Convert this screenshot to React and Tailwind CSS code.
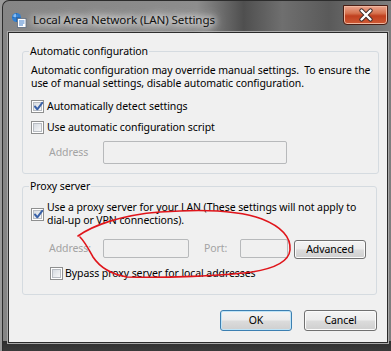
import React from "react";

function CheckBox({ checked }) {
  return (
    <span className="flex h-[13px] w-[13px] shrink-0 border border-[#8e8f8f] bg-white p-[1px]">
      <span className="relative flex flex-1 items-center justify-center border border-[#b8bcc2] bg-gradient-to-br from-[#d6dbe1] to-[#f7f7f7]">
        {checked && (
          <svg width="11" height="11" viewBox="0 0 11 11" className="absolute left-[-1px] top-[-2px]">
            <path d="M2 5.5 L4.3 8.3 L9.2 1.8" fill="none" stroke="#3a62a8" strokeWidth="2" strokeLinejoin="round" strokeLinecap="round" />
          </svg>
        )}
      </span>
    </span>
  );
}

function Btn({ children, def, w, h }) {
  return (
    <div
      className={
        "flex items-center justify-center rounded-[3px] border bg-[linear-gradient(to_bottom,#f4f4f4_0%,#ececec_48%,#dcdcdc_52%,#cfcfcf_100%)] text-black " +
        (def
          ? "border-[#3c7fb1] shadow-[inset_0_0_0_1px_#bfe4f7]"
          : "border-[#707070] shadow-[inset_0_0_0_1px_#fbfbfb]")
      }
      style={{ width: w, height: h }}
    >
      {children}
    </div>
  );
}

function Input({ w, h }) {
  return (
    <div
      className="rounded-[2px] border border-[#b7b9bb] bg-[#f0f0f0]"
      style={{ width: w, height: h }}
    />
  );
}

export default function App() {
  return (
    <div className="relative flex h-[351px] w-[391px] flex-col overflow-hidden bg-[#9a9a9a] font-['Noto_Sans',sans-serif] text-[10.5px] leading-[13px] tracking-[-0.08px] text-black">
      {/* window frame */}
      <div className="ml-[2px] flex flex-1 flex-col rounded-tl-[7px] border-l border-t border-[#2c2c2c] bg-[linear-gradient(to_bottom,transparent_0%,transparent_97%,#2e2e2e_97%,#3a3a3a_100%),linear-gradient(90deg,#858585_0%,#8d8d8d_50%,#4f4f4f_62%,#6f6f6f_72%,#5a5a5a_84%,#7e7e7e_100%)]">
        {/* title bar */}
        <div className="relative flex h-[31px] shrink-0 items-center pl-[8px]">
          <svg width="16" height="16" viewBox="0 0 16 16" className="mt-[6px]">
            <circle cx="5.5" cy="5.5" r="4.5" fill="#2f7fd3" />
            <circle cx="4.3" cy="4" r="2" fill="#9fd0ff" opacity="0.8" />
            <path d="M1.5 5.5 H9.5 M5.5 1 V10" stroke="#1c5fa8" strokeWidth="0.6" />
            <rect x="6.5" y="6.5" width="8.5" height="9" fill="#ffffff" stroke="#5a6a80" strokeWidth="0.8" />
            <path d="M8 9 H13.5 M8 11 H13.5 M8 13 H12" stroke="#3b7bc8" strokeWidth="1" />
          </svg>
          <span className="ml-[6px] mt-[6px] text-[11.6px] tracking-[-0.1px] text-[#111] [text-shadow:0_0_6px_#ffffff,0_0_10px_#ffffff,0_0_14px_#e8e8e8]">
            Local Area Network (LAN) Settings
          </span>
          {/* close button */}
          <div className="absolute right-[3px] top-[4px] flex h-[20px] w-[45px] items-center justify-center rounded-b-[4px] border border-[#4a1e14] bg-[linear-gradient(to_bottom,#e9a48f_0%,#d6734f_40%,#c0401f_55%,#cf5a35_100%)] shadow-[inset_0_0_0_1px_#f0b8a0]">
            <svg width="16" height="14" viewBox="0 0 16 14">
              <path d="M3.5 2.5 L12.5 11.5 M12.5 2.5 L3.5 11.5" stroke="#3a2a28" strokeWidth="4.2" strokeLinecap="round" />
              <path d="M3.5 2.5 L12.5 11.5 M12.5 2.5 L3.5 11.5" stroke="#ffffff" strokeWidth="2.4" strokeLinecap="round" />
            </svg>
          </div>
        </div>

        {/* client area */}
        <div className="mb-[8px] ml-[5px] mr-[3px] flex flex-1 flex-col border border-[#2a2a2a] bg-[#f0f0f0] pl-[13px] pr-[10px] pt-[11px] shadow-[0_0_0_1px_#a8a8a8]">
          {/* Automatic configuration */}
          <fieldset className="flex flex-col rounded-[3px] border border-[#d5dbe0] px-[8px] pb-[9px]">
            <legend className="ml-[-2px] px-[1px] leading-[14px]">Automatic configuration</legend>
            <p className="mt-[6px] whitespace-pre">
              {"Automatic configuration may override manual settings.  To ensure the\nuse of manual settings, disable automatic configuration."}
            </p>
            <div className="mt-[10px] flex h-[13px] items-center gap-[3px]">
              <CheckBox checked />
              <span>Automatically detect settings</span>
            </div>
            <div className="mt-[8px] flex h-[13px] items-center gap-[3px]">
              <CheckBox />
              <span>Use automatic configuration script</span>
            </div>
            <div className="mt-[7px] flex items-center pl-[18px]">
              <span className="w-[54px] text-[#a3a3a3]">Address</span>
              <Input w={184} h={23} />
            </div>
          </fieldset>

          {/* Proxy server */}
          <fieldset className="mt-[5px] flex flex-col rounded-[3px] border border-[#d5dbe0] px-[8px] pb-[14px]">
            <legend className="ml-[-2px] px-[1px] leading-[14px]">Proxy server</legend>
            <div className="mt-[8px] flex items-center gap-[3px]">
              <CheckBox checked />
              <span className="whitespace-pre">
                {"Use a proxy server for your LAN (These settings will not apply to\ndial-up or VPN connections)."}
              </span>
            </div>
            <div className="mt-[11px] flex items-center pl-[18px]">
              <span className="w-[54px] text-[#a3a3a3]">Address:</span>
              <Input w={86} h={19} />
              <span className="ml-[15px] w-[36px] text-[#a3a3a3]">Port:</span>
              <Input w={48} h={19} />
              <div className="ml-[6px] mt-[2px]">
                <Btn w={72} h={19}>Advanced</Btn>
              </div>
            </div>
            <div className="mt-[8px] flex h-[13px] items-center gap-[2px] pl-[19px]">
              <CheckBox />
              <span>Bypass proxy server for local addresses</span>
            </div>
          </fieldset>

          {/* buttons */}
          <div className="mt-[15px] flex justify-end gap-[12px]">
            <Btn def w={72} h={21}>OK</Btn>
            <Btn w={73} h={21}>Cancel</Btn>
          </div>
        </div>
      </div>

      {/* red freehand annotation */}
      <svg className="pointer-events-none absolute left-0 top-0" width="391" height="351" viewBox="0 0 391 351">
        <path
          d="M78 236 C 92 226, 120 215, 160 212 C 200 209, 238 210, 262 219 C 282 227, 291 238, 290 250 C 289 261, 277 268, 252 272 C 222 276, 165 278, 127 277 C 110 274, 99 266, 93 257 C 88 248, 85 242, 80 237"
          fill="none"
          stroke="#e0151b"
          strokeWidth="1.6"
          strokeLinecap="round"
        />
      </svg>
    </div>
  );
}
